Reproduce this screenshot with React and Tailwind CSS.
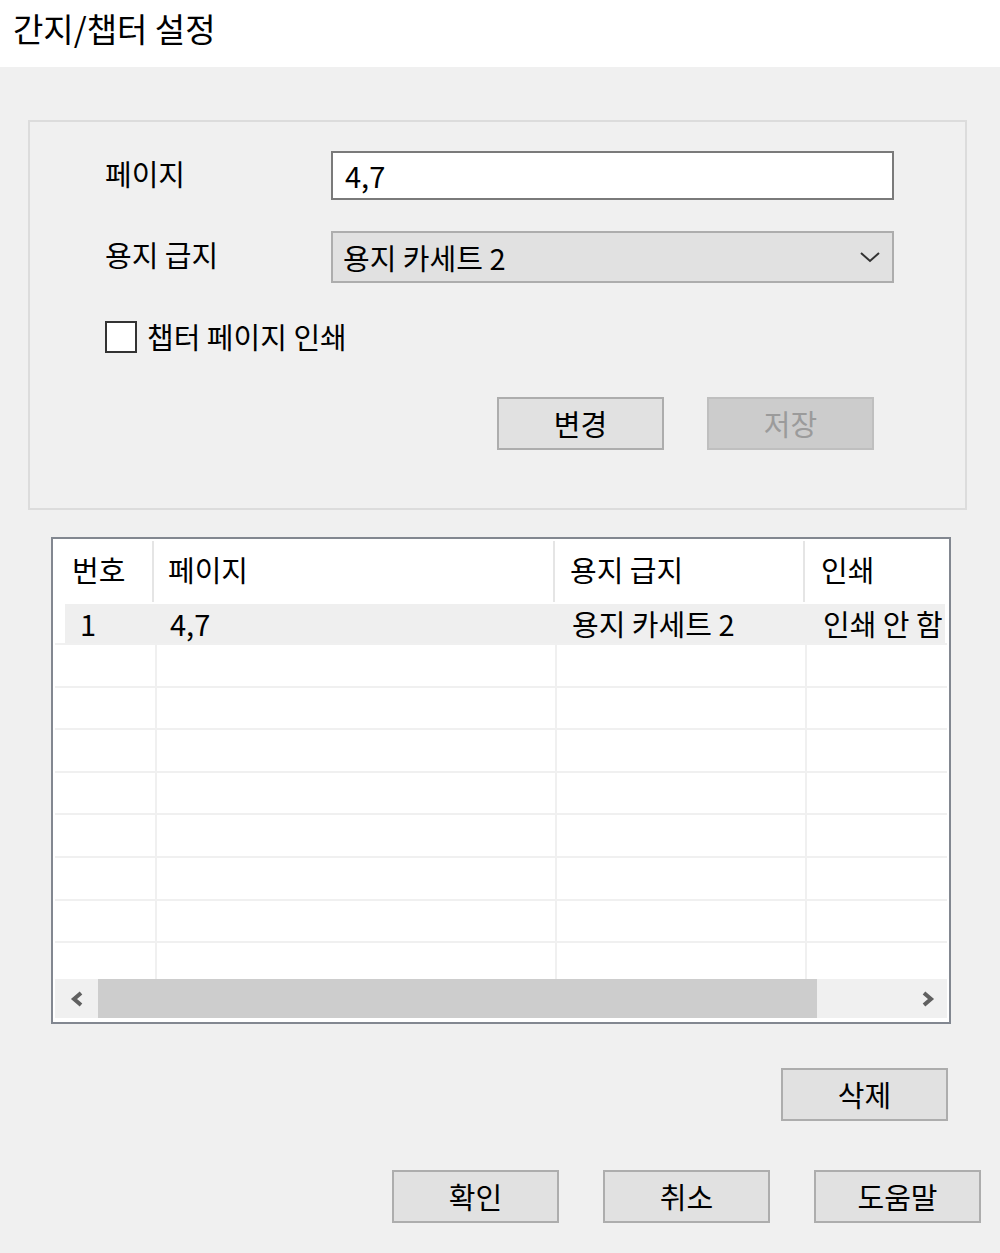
import React from 'react';

const font = { fontFamily: '"Malgun Gothic", "Noto Sans CJK KR", "Noto Sans", sans-serif' };

function WinButton({ label, disabled = false }) {
  return (
    <div
      className={`w-[167px] h-[53px] border-2 flex items-center justify-center text-[29px] ${
        disabled ? 'bg-[#cccccc] border-[#bfbfbf] text-[#9b9b9b]' : 'bg-[#e1e1e1] border-[#adadad] text-black'
      }`}
    >
      {label}
    </div>
  );
}

export default function App() {
  const emptyRows = [0, 1, 2, 3, 4, 5, 6, 7];

  return (
    <div className="w-[1000px] h-[1253px] bg-[#f0f0f0] text-black leading-none" style={font}>
      {/* title */}
      <div className="h-[67px] bg-white flex items-center pl-[13px] pb-[10px] text-[33px]">간지/챕터 설정</div>

      {/* group box */}
      <div className="ml-[28px] mt-[53px] w-[939px] h-[390px] border-2 border-[#dcdcdc] pt-[29px] pl-[75px]">
        <div className="flex items-center h-[49px]">
          <div className="w-[226px] text-[29px] pb-[4px]">페이지</div>
          <div className="w-[563px] h-[49px] bg-white border-2 border-[#7a7a7a] flex items-center pl-[12px] text-[29px]">
            4,7
          </div>
        </div>
        <div className="flex items-center h-[52px] mt-[31px]">
          <div className="w-[226px] text-[29px] pb-[6px]">용지 급지</div>
          <div className="w-[563px] h-[52px] bg-[#e1e1e1] border-2 border-[#adadad] flex items-center justify-between pl-[10px] pr-[12px] text-[29px]">
            <span>용지 카세트 2</span>
            <svg width="20" height="12" viewBox="0 0 20 12">
              <polyline points="1,2 10,10 19,2" fill="none" stroke="#333" strokeWidth="2" />
            </svg>
          </div>
        </div>
        <div className="flex items-center h-[32px] mt-[38px]">
          <div className="w-[32px] h-[32px] bg-white border-2 border-[#333333]" />
          <div className="ml-[10px] text-[29px] pb-[2px]">챕터 페이지 인쇄</div>
        </div>
        <div className="flex gap-[43px] mt-[44px] ml-[392px]">
          <WinButton label="변경" />
          <WinButton label="저장" disabled />
        </div>
      </div>

      {/* list view */}
      <div className="ml-[51px] mt-[27px] w-[900px] h-[487px] border-2 border-[#828790] bg-white flex flex-col p-[2px] text-[29px]">
        {/* header */}
        <div className="flex h-[61px] shrink-0">
          <div className="w-[99px] h-full border-r-2 border-[#e5e5e5] flex items-center pl-[17px] pb-[4px]">번호</div>
          <div className="w-[401px] h-full border-r-2 border-[#e5e5e5] flex items-center pl-[14px] pb-[4px]">페이지</div>
          <div className="w-[250px] h-full border-r-2 border-[#e5e5e5] flex items-center pl-[15px] pb-[4px]">용지 급지</div>
          <div className="flex-1 h-full flex items-center pl-[16px] pb-[4px]">인쇄</div>
        </div>
        {/* body */}
        <div className="flex-1 overflow-hidden">
          <div className="flex h-[43px] border-b-2 border-[#f0f0f0] w-[892px] pt-[2px]">
            <div className="w-[10px]" />
            <div className="flex-1 flex items-center bg-[#efefef] mr-[2px] leading-normal">
              <div className="w-[92px] pl-[15px] shrink-0">1</div>
              <div className="w-[400px] pl-[13px] shrink-0">4,7</div>
              <div className="w-[250px] pl-[15px] shrink-0">용지 카세트 2</div>
              <div className="flex-1 min-w-0 pl-[16px] whitespace-nowrap overflow-hidden">인쇄 안 함</div>
            </div>
          </div>
          {emptyRows.map((r) => (
            <div key={r} className="flex h-[42.6px] border-b-2 border-[#f0f0f0] w-[892px]">
              <div className="w-[102px] border-r-2 border-[#f0f0f0]" />
              <div className="w-[400px] border-r-2 border-[#f0f0f0]" />
              <div className="w-[250px] border-r-2 border-[#f0f0f0]" />
              <div className="flex-1" />
            </div>
          ))}
        </div>
        {/* horizontal scrollbar */}
        <div className="h-[39px] shrink-0 bg-[#f0f0f0] flex items-center w-[892px] mb-[2px]">
          <div className="w-[43px] flex items-center justify-center">
            <svg width="14" height="16" viewBox="0 0 14 16">
              <polyline points="11,2 4,8 11,14" fill="none" stroke="#606060" strokeWidth="4" />
            </svg>
          </div>
          <div className="w-[719px] h-full bg-[#cdcdcd]" />
          <div className="flex-1 flex items-center justify-end pr-[12px]">
            <svg width="14" height="16" viewBox="0 0 14 16">
              <polyline points="3,2 10,8 3,14" fill="none" stroke="#606060" strokeWidth="4" />
            </svg>
          </div>
        </div>
      </div>

      {/* delete */}
      <div className="flex justify-end pr-[52px] mt-[44px]">
        <WinButton label="삭제" />
      </div>

      {/* dialog buttons */}
      <div className="flex justify-end gap-[44px] pr-[19px] mt-[49px]">
        <WinButton label="확인" />
        <WinButton label="취소" />
        <WinButton label="도움말" />
      </div>
    </div>
  );
}
